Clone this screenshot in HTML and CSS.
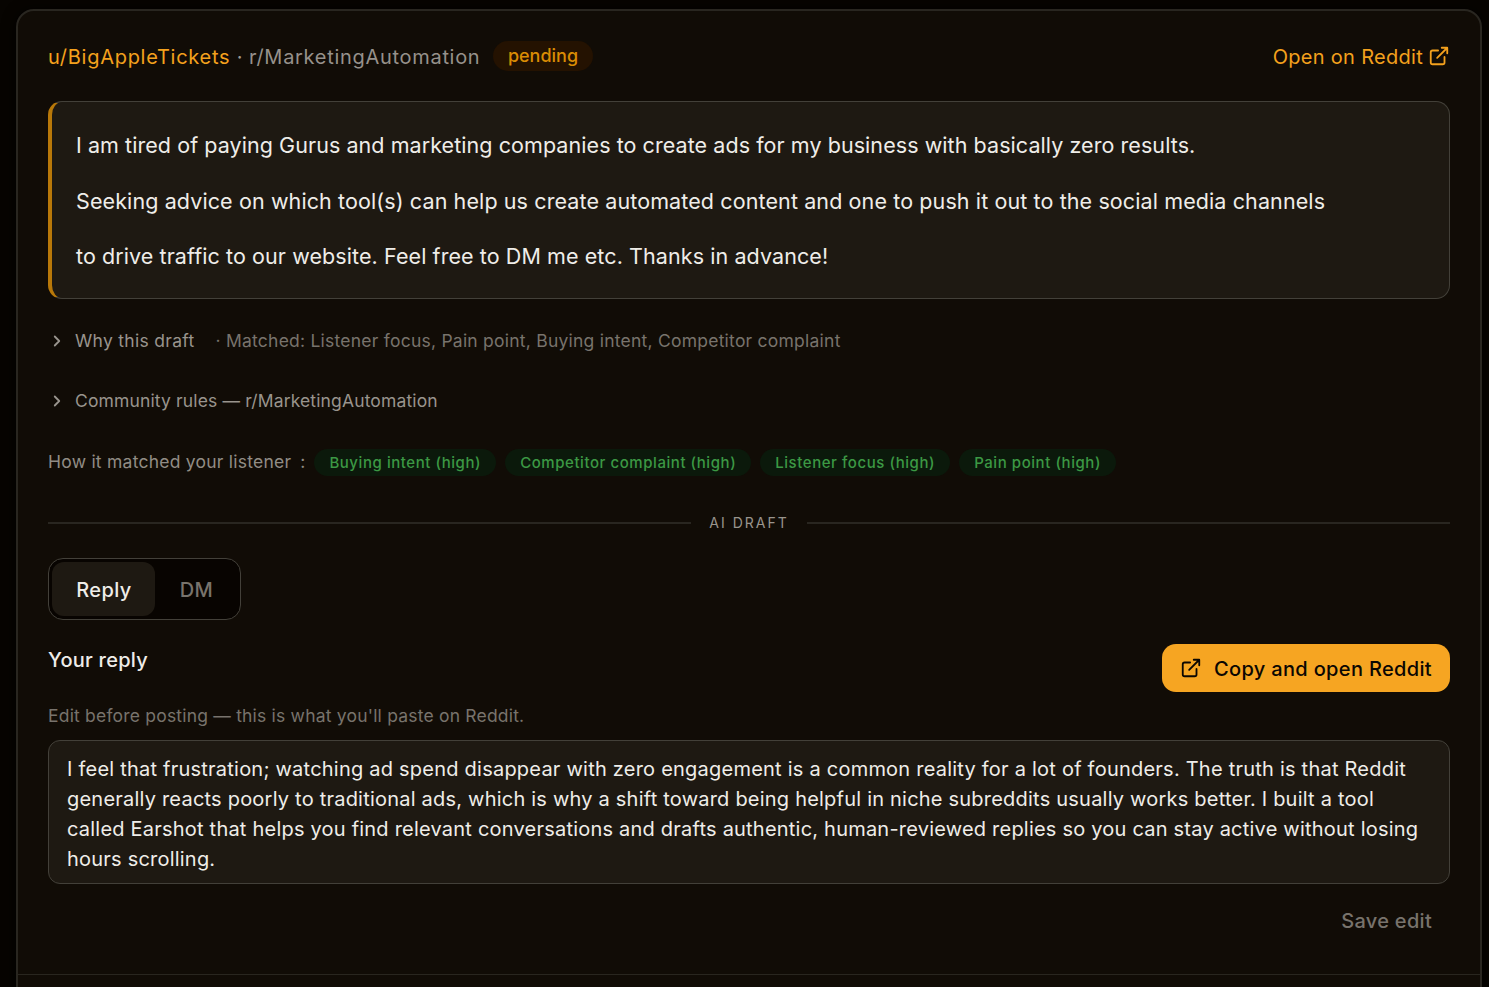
FILE: index.html
```html
<!DOCTYPE html>
<html lang="en">
<head>
<meta charset="utf-8">
<title>Draft review</title>
<link rel="stylesheet" href="styles.css">
</head>
<body>
<svg class="sprite" width="0" height="0">
  <symbol id="external" viewBox="0 0 24 24"><path d="M15 3h6v6M10 14 21 3M18 13v6a2 2 0 0 1-2 2H5a2 2 0 0 1-2-2V8a2 2 0 0 1 2-2h6"/></symbol>
  <symbol id="chevron" viewBox="0 0 24 24"><path d="m9 18 6-6-6-6"/></symbol>
</svg>
<main class="card">
  <header class="head">
    <a class="user">u/BigAppleTickets</a>
    <span class="dot">·</span>
    <span class="sub">r/MarketingAutomation</span>
    <span class="status">pending</span>
    <a class="open">Open on Reddit<svg class="icon"><use href="#external"/></svg></a>
  </header>
  <blockquote class="quote">
    <p class="q1">I am tired of paying Gurus and marketing companies to create ads for my business with basically zero results.</p>
    <p class="q2">Seeking advice on which tool(s) can help us create automated content and one to push it out to the social media channels</p>
    <p class="q3">to drive traffic to our website. Feel free to DM me etc. Thanks in advance!</p>
  </blockquote>
  <div class="fold">
    <svg class="chev"><use href="#chevron"/></svg><span class="why">Why this draft</span><span class="matched">· Matched: Listener focus, Pain point, Buying intent, Competitor complaint</span>
  </div>
  <div class="fold second">
    <svg class="chev"><use href="#chevron"/></svg><span class="rules">Community rules — r/MarketingAutomation</span>
  </div>
  <div class="signals">
    <span class="how">How it matched your listener</span><span class="colon">:</span>
    <div class="tags">
      <span class="tag">Buying intent (high)</span>
      <span class="tag">Competitor complaint (high)</span>
      <span class="tag">Listener focus (high)</span>
      <span class="tag">Pain point (high)</span>
    </div>
  </div>
  <div class="divider"><span>AI DRAFT</span></div>
  <div class="tabs"><button class="tab active">Reply</button><button class="tab">DM</button></div>
  <div class="replyhead">
    <h2>Your reply</h2>
    <button class="copy"><svg class="icon"><use href="#external"/></svg><span>Copy and open Reddit</span></button>
  </div>
  <p class="hint">Edit before posting — this is what you'll paste on Reddit.</p>
  <div class="editor">
    <span class="e1">I feel that frustration; watching ad spend disappear with zero engagement is a common reality for a lot of founders. The truth is that Reddit</span>
    <span class="e2">generally reacts poorly to traditional ads, which is why a shift toward being helpful in niche subreddits usually works better. I built a tool</span>
    <span class="e3">called Earshot that helps you find relevant conversations and drafts authentic, human-reviewed replies so you can stay active without losing</span>
    <span class="e4">hours scrolling.</span>
  </div>
  <div class="actions"><button class="save">Save edit</button></div>
  <footer class="foot"></footer>
</main>
</body>
</html>
```
FILE: styles.css
```css
* { box-sizing: border-box; margin: 0; padding: 0; }
body {
  height: 987px;
  overflow: hidden;
  padding: 9px 7px 0 16px;
  background: #070401;
  font-family: Inter, sans-serif;
  font-size: 20px;
  color: #efede9;
}
button { font: inherit; border: 0; background: none; color: inherit; }
p, span, a, h2 { white-space: nowrap; }
.sprite { display: block; position: absolute; }
svg { fill: none; stroke: currentColor; stroke-width: 2; stroke-linecap: round; stroke-linejoin: round; flex: none; }
.card {
  height: 1000px;
  padding: 0 30px;
  background: #110c06;
  border: 2px solid #292620;
  border-radius: 18px;
  box-shadow: 0 2px 14px #000;
}
.head { display: flex; align-items: center; height: 90px; }
.user { padding-top: 2px; color: #f4a11d; letter-spacing: .72px; }
.dot { width: 18.6px; padding-top: 2px; text-align: center; color: #a09b94; }
.sub { padding-top: 2px; color: #96918b; letter-spacing: .7px; }
.status {
  width: 100px; height: 30px; margin-left: 12.6px; line-height: 29px;
  border-radius: 15px; background: #241201; color: #da8c04;
  font-size: 18px; font-weight: 500; text-align: center;
}
.open { display: flex; align-items: center; gap: 5.4px; margin-left: auto; padding-top: 2px; color: #f4a11d; letter-spacing: .29px; }
.icon { width: 22px; height: 22px; }
.open .icon { margin: 0 -.4px 2px 0; }
.quote {
  height: 198px; padding: 16px 24px;
  border: 1px solid #434039; border-left: 4px solid #b87809;
  border-radius: 14px; background: #1e1912;
  font-size: 21.5px; line-height: 55.5px;
}
.q1 { letter-spacing: .065px; }
.q2 { letter-spacing: .108px; }
.q3 { letter-spacing: .085px; }
.fold { display: flex; align-items: center; height: 24px; margin-top: 30px; font-size: 17.5px; color: #99948d; }
.fold.second { margin-top: 36px; }
.fold span { padding-bottom: 2px; }
.chev { width: 18px; height: 18px; margin-right: 9px; stroke-width: 2.4; }
.why { letter-spacing: .3px; }
.matched { margin-left: 21px; color: #78736c; letter-spacing: .235px; }
.rules { letter-spacing: .14px; }
.signals { display: flex; align-items: center; height: 28px; margin-top: 35px; font-size: 17.5px; color: #918c85; }
.how, .colon { padding-bottom: 2px; letter-spacing: .24px; }
.colon { width: 23px; text-align: center; }
.tags { display: flex; gap: 9px; }
.tag { height: 27px; padding: 0 15px; line-height: 27px; border-radius: 14px; background: #0b190b; color: #3c9844; font-size: 15px; font-weight: 500; letter-spacing: .56px; }
.divider { display: flex; align-items: center; gap: 18px; height: 20px; margin-top: 37px; font-size: 14px; letter-spacing: 2px; color: #99948d; }
.divider span { padding-bottom: 2px; }
.divider::before, .divider::after { content: ""; flex: 1; height: 2px; background: #292620; }
.tabs { display: flex; width: 193px; height: 62px; margin-top: 25px; padding: 3px; border: 1px solid #434039; border-radius: 15px; background: #080401; }
.tab { width: 103px; height: 54px; padding: 2px 0 0 1px; border-radius: 12px; font-size: 20px; font-weight: 500; letter-spacing: .4px; color: #78736c; }
.tab:last-child { width: 82px; }
.tab.active { background: #1e1912; color: #efede9; }
.replyhead { display: flex; justify-content: space-between; height: 48px; margin-top: 24px; }
h2 { font-size: 20px; font-weight: 500; line-height: 32px; letter-spacing: .25px; }
.copy { display: flex; align-items: center; width: 288px; height: 48px; padding: 0 17.8px; gap: 12.2px; border-radius: 14px; background: #f6a522; color: #0b0702; font-weight: 500; letter-spacing: .34px; }
.copy .icon { margin-bottom: 1px; }
.copy span { padding-top: 2px; }
.hint { height: 24px; margin-top: 12px; line-height: 24px; font-size: 17.5px; letter-spacing: .2px; color: #78736c; }
.editor { height: 144px; margin-top: 12px; padding: 13px 18px; border: 1px solid #434039; border-radius: 12px; background: #1e1912; line-height: 30px; letter-spacing: .215px; }
.editor span { display: block; }
.editor .e1 { letter-spacing: .227px; }
.actions { display: flex; justify-content: flex-end; height: 90px; padding: 19px 18px 0 0; }
.save { height: 36px; font-weight: 500; letter-spacing: .3px; color: #78736c; }
.foot { height: 30px; margin: 0 -30px; border-top: 1px solid #29261f; }
```
